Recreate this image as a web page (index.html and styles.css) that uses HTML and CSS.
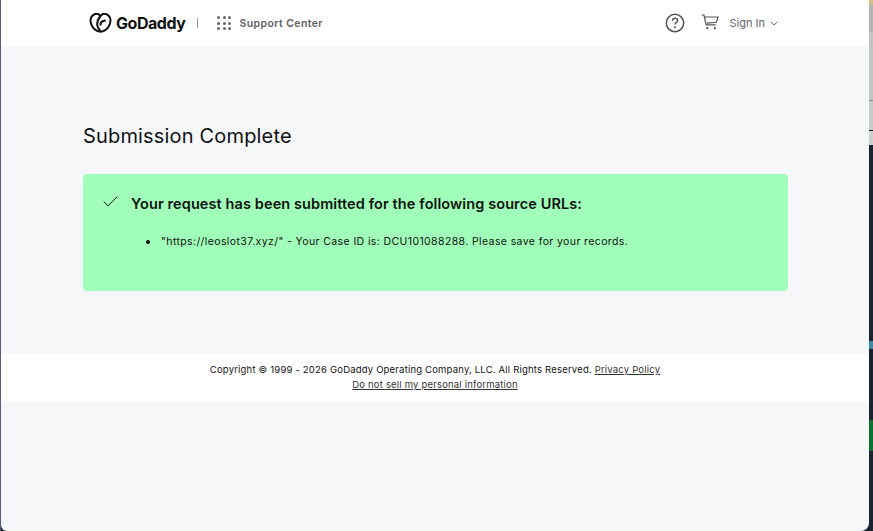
FILE: index.html
```html
<!DOCTYPE html>
<html lang="en">
<head>
<meta charset="utf-8">
<title>Submission Complete</title>
<link rel="stylesheet" href="styles.css">
</head>
<body>
<div class="desktop">
  <div class="backdrop-strip">
    <i class="s s1"></i><i class="s s2"></i><i class="s s3"></i><i class="s s4"></i><i class="s s5"></i><i class="s s6"></i><i class="s s6b"></i><i class="s s7"></i><i class="s s8"></i><i class="s s9"></i>
  </div>
  <div class="window">
    <header class="topbar">
      <div class="brand">
        <svg class="logo-mark" viewBox="0 0 23 20" width="23" height="20" aria-hidden="true">
          <path d="M17.800 1.300c-2.300-1.200-4.800-.3-6.300 1.700C10 1 7.500.1 5.200 1.300 2 3 1 6.800 2 10.600c1 3.900 4.600 7.800 9.500 8.200 4.900-.4 8.500-4.300 9.500-8.200 1-3.800 0-7.600-3.200-9.300z" fill="none" stroke="#111" stroke-width="2"/>
          <path d="M11.500 3c-2.200 2.700-3.500 5.800-3.300 8.800.1 2.300 1.500 4.300 3.300 6.500M16.600 7.300l-3.400 1.200c-1.500.6-1.900 2-1.500 4" fill="none" stroke="#111" stroke-width="2"/>
        </svg>
        <span class="wordmark">GoDaddy</span>
        <span class="divider"></span>
        <span class="apps">
          <i></i><i></i><i></i><i></i><i></i><i></i><i></i><i></i><i></i>
        </span>
        <span class="support">Support Center</span>
      </div>
      <nav class="actions">
        <svg class="help" viewBox="0 0 20 20" width="20" height="20" aria-hidden="true">
          <circle cx="10" cy="10" r="8.700" fill="none" stroke="#555" stroke-width="1.500"/>
          <path d="M7.500 7.800c0-1.500 1.100-2.500 2.600-2.500s2.500.9 2.500 2.200c0 1.900-2.600 1.900-2.600 4.100" fill="none" stroke="#555" stroke-width="1.500"/>
          <circle cx="10" cy="14.300" r="1" fill="#555"/>
        </svg>
        <svg class="cart" viewBox="0 0 18 16" width="18" height="16" aria-hidden="true">
          <path d="M.5 1h2.400l2.300 9.800h9.600M3.500 3h13.600l-1.700 5.300-9.500.8" fill="none" stroke="#555" stroke-width="1.200"/>
          <circle cx="6.300" cy="14.200" r="1.100" fill="#555"/>
          <circle cx="13.800" cy="14.200" r="1.100" fill="#555"/>
        </svg>
        <span class="signin">Sign In</span>
        <svg class="chev" viewBox="0 0 8 5" width="8" height="5" aria-hidden="true"><path d="M.7.8 4 4 7.300.8" fill="none" stroke="#666" stroke-width="1"/></svg>
      </nav>
    </header>
    <main class="content">
      <h1 class="title">Submission Complete</h1>
      <section class="alert">
        <svg class="check" viewBox="0 0 15 11" width="15" height="11" aria-hidden="true"><path d="M.7 5.500 5 9.800 14.300.7" fill="none" stroke="#111" stroke-width="1"/></svg>
        <div class="alert-body">
          <h2 class="alert-title">Your request has been submitted for the following source URLs:</h2>
          <ul class="alert-list">
            <li>"https://leoslot37.xyz/" - Your Case ID is: DCU101088288. Please save for your records.</li>
          </ul>
        </div>
      </section>
    </main>
    <footer class="footer">
      <div>Copyright © 1999 - 2026 GoDaddy Operating Company, LLC. All Rights Reserved. <a href="#">Privacy Policy</a></div>
      <div><a href="#">Do not sell my personal information</a></div>
    </footer>
  </div>
</div>
</body>
</html>
```
FILE: styles.css
```css
* { box-sizing: border-box; }
html, body { margin: 0; height: 100%; overflow: hidden; }
body { background: #1a2130; font-family: Inter, "Liberation Sans", sans-serif; color: #111; }
.desktop { position: relative; width: 873px; height: 531px; border-left: 1px solid #565a84; }
.backdrop-strip { position: absolute; top: 0; right: 0; width: 4px; height: 531px; display: flex; flex-direction: column; background: #1a2130; }
.s { display: block; flex: none; }
.s1 { height: 5px; background: #cdbf86; }
.s2 { height: 27px; background: #b4b4b4; }
.s3 { height: 68px; background: #c4c4c4; }
.s4 { height: 30px; background: #c9c9c9; border-top: 1px solid #8e8e8e; }
.s5 { height: 15px; background: #cfcfcf; border-top: 1px solid #111; }
.s6 { height: 196px; background: #1a2130; }
.s6b { height: 8px; background: #3f88a8; }
.s7 { height: 71px; background: #1a2130; }
.s8 { height: 31px; background: #0f7033; }
.s9 { height: 81px; background: #1a2130; }
.window { width: 868px; height: 531px; background: #f5f7f8; border-bottom-right-radius: 8px; border-bottom-left-radius: 6px; position: relative; overflow: hidden; }
.topbar { height: 46px; background: #fff; display: flex; align-items: center; justify-content: space-between; padding: 0 91px 0 88px; }
.brand, .actions { display: flex; align-items: center; }
.logo-mark { margin-right: 4px; }
.wordmark { font: 700 16px/1 Inter, "Liberation Sans", sans-serif; letter-spacing: -.45px; color: #111; }
.divider { width: 1px; height: 10px; background: #999; margin: 0 19px 0 12px; }
.apps { display: grid; grid-template-columns: repeat(3, 3px); gap: 2.500px; margin-right: 8px; }
.apps i { display: block; width: 3px; height: 3px; border-radius: 50%; background: #666; }
.support { font-size: 10.500px; font-weight: 600; color: #5c6066; letter-spacing: .4px; }
.help { margin-right: 16px; margin-top: -1px; }
.cart { margin-right: 10px; margin-top: -3px; }
.signin { font: 400 11px/1 Inter, "Liberation Sans", sans-serif; color: #666; margin: 1px 5px 0 0; }
.chev { margin-top: 1px; }
.content { height: 308px; padding: 77px 81px 0 82px; }
.title { margin: 0 0 25px; font: 400 20px/26px Inter, "Liberation Sans", sans-serif; color: #111; letter-spacing: .17px; }
.alert { height: 117px; background: #a0ffb8; border-radius: 4px; display: flex; padding: 21px 20px 0 20px; }
.check { flex: none; margin: 1px 13px 0 0; }
.alert-body { flex: 1; }
.alert-title { margin: 0 0 22px; font: 600 14.500px/18px Inter, "Liberation Sans", sans-serif; color: #111; letter-spacing: .1px; }
.alert-list { margin: 0; padding: 0 0 0 30px; list-style: none; font-size: 10.500px; line-height: 14px; letter-spacing: .39px; }
.alert-list li { position: relative; }
.alert-list li::before { content: ""; position: absolute; left: -15px; top: 5px; width: 4px; height: 4px; border-radius: 50%; background: #111; }
.footer { height: 47px; background: #fff; padding-top: 8px; text-align: center; font-size: 9.500px; line-height: 15px; color: #111; letter-spacing: .19px; }
.footer a { color: #333; }
```
